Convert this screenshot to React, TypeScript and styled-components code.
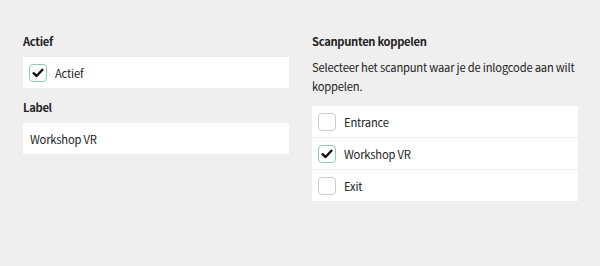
import React from "react";
import styled, { createGlobalStyle } from "styled-components";

const Global = createGlobalStyle`
  html, body { margin: 0; padding: 0; background: #efefef; }
  body {
    font-family: "Noto Sans CJK JP", "Open Sans", sans-serif;
    color: #222;
  }
`;

const Page = styled.div`
  width: 600px;
  height: 266px;
  box-sizing: border-box;
  padding: 31px 22px 0 23px;
  display: grid;
  grid-template-columns: 266px 266px;
  column-gap: 23px;
  align-items: start;
`;

const Column = styled.div`
  display: flex;
  flex-direction: column;
`;

const Field = styled.div`
  display: flex;
  flex-direction: column;
  & + & { margin-top: 9px; }
`;

const Title = styled.div`
  font-size: 11.2px;
  letter-spacing: -0.3px;
  line-height: 20px;
  font-weight: 700;
  margin-bottom: 6px;
`;

const Description = styled.p`
  margin: 1px 0 10px;
  font-size: 11.2px;
  letter-spacing: -0.2px;
  line-height: 19px;
  white-space: nowrap;
`;

const Box = styled.div<{ $inset?: number }>`
  height: 31px;
  background: #fff;
  display: flex;
  align-items: center;
  padding-left: ${(p) => p.$inset ?? 6}px;
  font-size: 11.2px;
  letter-spacing: -0.2px;
`;

const List = styled.div`
  display: flex;
  flex-direction: column;
  gap: 1px;
`;

const Row = styled.label`
  height: 31px;
  background: #fff;
  display: flex;
  align-items: center;
  gap: 8px;
  padding-left: 6px;
  font-size: 11.2px;
  letter-spacing: -0.2px;
`;

const Check = styled.span<{ $on?: boolean }>`
  width: 18px;
  height: 18px;
  box-sizing: border-box;
  border-radius: 4px;
  border: 1.5px solid ${(p) => (p.$on ? "#8fcbb2" : "#cdcdcd")};
  background: #fff;
  display: inline-flex;
  align-items: center;
  justify-content: center;
  flex: none;
`;

const CheckBox = ({ on }: { on?: boolean }) => (
  <Check $on={on}>
    {on && (
      <svg width="12" height="10" viewBox="0 0 12 10">
        <path d="M1.6 5.2 L4.6 8 L10.4 1.8" fill="none" stroke="#111" strokeWidth="2.4" strokeLinecap="round" strokeLinejoin="round" />
      </svg>
    )}
  </Check>
);

const InlineRow = styled.div`
  display: flex;
  align-items: center;
  gap: 8px;
`;

export default function App() {
  const points = [
    { name: "Entrance", on: false },
    { name: "Workshop VR", on: true },
    { name: "Exit", on: false },
  ];
  return (
    <>
      <Global />
      <Page>
        <Column>
          <Field>
            <Title>Actief</Title>
            <Box>
              <InlineRow>
                <CheckBox on />
                <span>Actief</span>
              </InlineRow>
            </Box>
          </Field>
          <Field>
            <Title>Label</Title>
            <Box $inset={7}>Workshop VR</Box>
          </Field>
        </Column>
        <Column>
          <Title>Scanpunten koppelen</Title>
          <Description>
            Selecteer het scanpunt waar je de inlogcode aan wilt
            <br />
            koppelen.
          </Description>
          <List>
            {points.map((p) => (
              <Row key={p.name}>
                <CheckBox on={p.on} />
                <span>{p.name}</span>
              </Row>
            ))}
          </List>
        </Column>
      </Page>
    </>
  );
}
